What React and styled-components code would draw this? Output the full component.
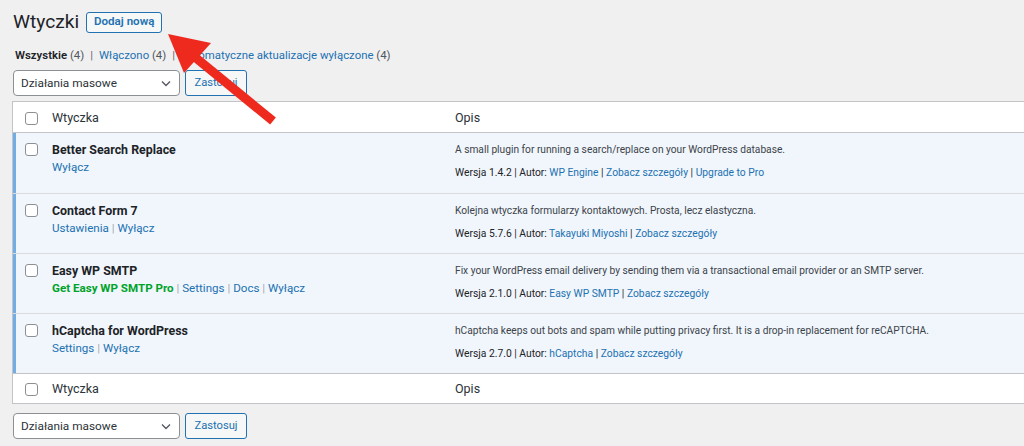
import React from "react";
import styled, { createGlobalStyle } from "styled-components";

const Global = createGlobalStyle`
  html, body { margin: 0; padding: 0; overflow: hidden; }
  body {
    background: #f0f0f1;
    font-family: "Roboto", "Liberation Sans", sans-serif;
    font-size: 12px;
    color: #3c434a;
    width: 1024px;
    height: 446px;
  }
`;

const Page = styled.div`
  position: relative;
  padding: 9px 0 0 12px;
  width: 1040px;
`;

const TitleBar = styled.div`
  display: flex;
  align-items: center;
  gap: 7px;
  height: 26px;
`;

const Title = styled.h1`
  margin: 0 0 0 1px;
  font-size: 19.2px;
  font-weight: 400;
  color: #1d2327;
  line-height: 26px;
`;

const OutlineButton = styled.button`
  font-family: inherit;
  font-size: ${(p) => p.$fs}px;
  font-weight: ${(p) => (p.$strong ? 600 : 400)};
  color: #2271b1;
  background: #f6f7f7;
  border: 1px solid #2271b1;
  border-radius: 3px;
  height: ${(p) => p.$h}px;
  width: ${(p) => p.$w}px;
  padding: 0;
  cursor: pointer;
  line-height: 1;
`;

const Filters = styled.ul`
  list-style: none;
  margin: 12px 0 0 3px;
  padding: 0;
  display: flex;
  font-size: 11.4px;
  line-height: 16px;
  color: #646970;
`;

const FilterItem = styled.li`
  display: flex;
  align-items: center;
`;

const FilterLink = styled.a`
  color: ${(p) => (p.$current ? "#1d2327" : "#2271b1")};
  font-weight: ${(p) => (p.$current ? 600 : 400)};
  text-decoration: none;
  white-space: pre;
`;

const Count = styled.span`
  color: #50575e;
  font-weight: 400;
`;

const Sep = styled.span`
  color: #646970;
  margin: 0 6px;
`;

const BulkBar = styled.div`
  display: flex;
  align-items: center;
  gap: 5px;
  margin-top: ${(p) => p.$mt}px;
`;

const Select = styled.div`
  position: relative;
  box-sizing: border-box;
  width: 167px;
  height: 26px;
  margin-left: 1px;
  border: 1px solid #8c8f94;
  border-radius: 4px;
  background: #fff;
  color: #2c3338;
  font-size: 11.8px;
  display: flex;
  align-items: center;
  padding: 0 24px 0 7px;
`;

const Chevron = styled.svg`
  position: absolute;
  right: 8px;
  top: 9px;
`;

const Table = styled.div`
  margin-top: 5px;
  background: #fff;
  border: 1px solid #c3c4c7;
  border-right: none;
`;

const Row = styled.div`
  display: grid;
  grid-template-columns: 29px 403px 1fr;
  background: ${(p) => (p.$active ? "#f0f6fc" : "#fff")};
  box-shadow: ${(p) => (p.$active ? "inset 3px 0 0 #72aee6" : "none")};
  border-top: ${(p) => p.$border || "none"};
  height: ${(p) => p.$h}px;
  box-sizing: border-box;
`;

const CheckCell = styled.div`
  padding: ${(p) => p.$pt}px 0 0 12px;
`;

const Box = styled.span`
  display: block;
  width: 13px;
  height: 13px;
  box-sizing: border-box;
  border: 1px solid #8c8f94;
  border-radius: 3px;
  background: #fff;
`;

const HeadCell = styled.div`
  padding: 0 10px;
  display: flex;
  align-items: center;
  color: #2c3338;
  font-size: 12.5px;
`;

const NameCell = styled.div`
  padding: 8px 10px 0;
`;

const PluginName = styled.div`
  font-weight: 700;
  color: #1d2327;
  font-size: 12.4px;
  line-height: 17px;
`;

const Actions = styled.div`
  font-size: 11.6px;
  line-height: 18px;
  color: #a7aaad;
  white-space: pre;
`;

const ActionLink = styled.a`
  color: ${(p) => (p.$green ? "#00a32a" : "#2271b1")};
  font-weight: ${(p) => (p.$green ? 700 : 400)};
  text-decoration: none;
`;

const DescCell = styled.div`
  padding: 8px 10px 0;
`;

const DescText = styled.p`
  margin: 0 0 5.5px;
  font-size: 10.2px;
  line-height: 17px;
  color: #3c434a;
  white-space: nowrap;
`;

const Meta = styled.div`
  font-size: 10.3px;
  line-height: 17px;
  color: #1d2327;
  white-space: pre;
`;

const MetaLink = styled.a`
  color: #2271b1;
  text-decoration: none;
`;

const Arrow = styled.svg`
  position: absolute;
  left: 0;
  top: 0;
  pointer-events: none;
`;

const plugins = [
  {
    name: "Better Search Replace",
    actions: [{ t: "Wyłącz" }],
    desc: "A small plugin for running a search/replace on your WordPress database.",
    version: "1.4.2",
    author: "WP Engine",
    extra: ["Zobacz szczegóły", "Upgrade to Pro"],
  },
  {
    name: "Contact Form 7",
    actions: [{ t: "Ustawienia" }, { t: "Wyłącz" }],
    desc: "Kolejna wtyczka formularzy kontaktowych. Prosta, lecz elastyczna.",
    version: "5.7.6",
    author: "Takayuki Miyoshi",
    extra: ["Zobacz szczegóły"],
  },
  {
    name: "Easy WP SMTP",
    actions: [{ t: "Get Easy WP SMTP Pro", green: true }, { t: "Settings" }, { t: "Docs" }, { t: "Wyłącz" }],
    desc: "Fix your WordPress email delivery by sending them via a transactional email provider or an SMTP server.",
    version: "2.1.0",
    author: "Easy WP SMTP",
    extra: ["Zobacz szczegóły"],
  },
  {
    name: "hCaptcha for WordPress",
    actions: [{ t: "Settings" }, { t: "Wyłącz" }],
    desc: "hCaptcha keeps out bots and spam while putting privacy first. It is a drop-in replacement for reCAPTCHA.",
    version: "2.7.0",
    author: "hCaptcha",
    extra: ["Zobacz szczegóły"],
  },
];

function Bulk({ mt }) {
  return (
    <BulkBar $mt={mt}>
      <Select>
        Działania masowe
        <Chevron width="10" height="7" viewBox="0 0 10 7">
          <path d="M1 1.5 L5 5.5 L9 1.5" fill="none" stroke="#50575e" strokeWidth="1.3" />
        </Chevron>
      </Select>
      <OutlineButton $fs={11.2} $h={26} $w={62}>Zastosuj</OutlineButton>
    </BulkBar>
  );
}

export default function App() {
  return (
    <>
      <Global />
      <Page>
        <TitleBar>
          <Title>Wtyczki</Title>
          <OutlineButton $strong $fs={11.6} $h={21} $w={76}>Dodaj nową</OutlineButton>
        </TitleBar>
        <Filters>
          <FilterItem>
            <FilterLink $current>Wszystkie <Count>(4)</Count></FilterLink>
            <Sep>|</Sep>
          </FilterItem>
          <FilterItem>
            <FilterLink>Włączono <Count>(4)</Count></FilterLink>
            <Sep>|</Sep>
          </FilterItem>
          <FilterItem>
            <FilterLink>Automatyczne aktualizacje wyłączone <Count>(4)</Count></FilterLink>
          </FilterItem>
        </Filters>
        <Bulk mt={7} />
        <Table>
          <Row $h={30}>
            <CheckCell $pt={10}><Box /></CheckCell>
            <HeadCell>Wtyczka</HeadCell>
            <HeadCell>Opis</HeadCell>
          </Row>
          {plugins.map((p, i) => (
            <Row key={p.name} $active $h={i === 0 ? 61 : 60} $border={i === 0 ? "1px solid #c3c4c7" : "1px solid #dcdcde"}>
              <CheckCell $pt={10}><Box /></CheckCell>
              <NameCell>
                <PluginName>{p.name}</PluginName>
                <Actions>
                  {p.actions.map((a, j) => (
                    <React.Fragment key={a.t}>
                      {j > 0 && " | "}
                      <ActionLink $green={a.green}>{a.t}</ActionLink>
                    </React.Fragment>
                  ))}
                </Actions>
              </NameCell>
              <DescCell>
                <DescText>{p.desc}</DescText>
                <Meta>
                  Wersja {p.version} | Autor: <MetaLink>{p.author}</MetaLink>
                  {p.extra.map((e) => (
                    <React.Fragment key={e}>
                      {" | "}
                      <MetaLink>{e}</MetaLink>
                    </React.Fragment>
                  ))}
                </Meta>
              </DescCell>
            </Row>
          ))}
          <Row $h={30} $border="1px solid #c3c4c7">
            <CheckCell $pt={9}><Box /></CheckCell>
            <HeadCell>Wtyczka</HeadCell>
            <HeadCell>Opis</HeadCell>
          </Row>
        </Table>
        <Bulk mt={9} />
        <Arrow width="300" height="140" viewBox="0 0 300 140">
          <polygon points="168,34 211,43 184,73" fill="#ee2a1f" />
          <line x1="196" y1="58" x2="273" y2="121" stroke="#ee2a1f" strokeWidth="9" />
        </Arrow>
      </Page>
    </>
  );
}
